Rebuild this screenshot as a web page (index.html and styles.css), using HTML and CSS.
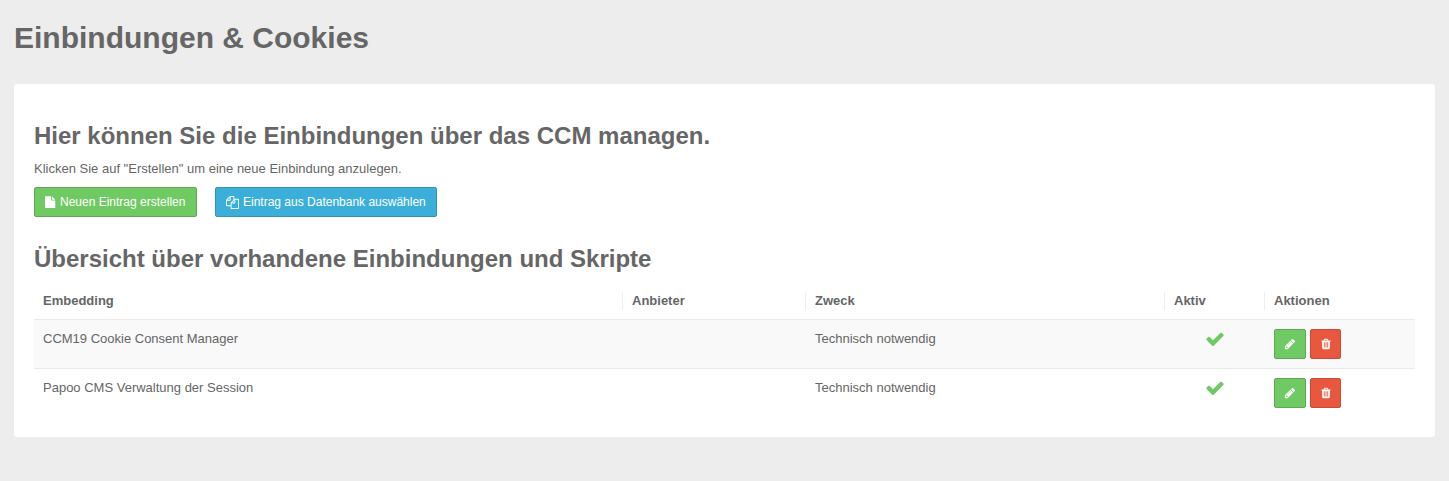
FILE: index.html
```html
<!DOCTYPE html>
<html lang="de">
<head>
<meta charset="utf-8">
<title>Einbindungen &amp; Cookies</title>
<link rel="stylesheet" href="styles.css">
</head>
<body>
<svg class="sprite" aria-hidden="true">
  <symbol id="check" viewBox="0 0 1792 1792"><path d="M1671 566q0 40-28 68l-724 724-136 136q-28 28-68 28t-68-28l-136-136-362-362q-28-28-28-68t28-68l136-136q28-28 68-28t68 28l294 295 656-657q28-28 68-28t68 28l136 136q28 28 28 68z"/></symbol>
  <symbol id="pencil" viewBox="0 0 1792 1792"><path d="M491 1536l91-91-235-235-91 91v107h128v128h107zm523-928q0-22-22-22-10 0-17 7l-542 542q-7 7-7 17 0 22 22 22 10 0 17-7l542-542q7-7 7-17zm-54-192l416 416-832 832h-416v-416zm683 96q0 53-37 90l-166 166-416-416 166-165q36-38 90-38 53 0 91 38l235 234q37 39 37 91z"/></symbol>
  <symbol id="trash" viewBox="0 0 1792 1792"><path d="M704 1376v-704q0-14-9-23t-23-9h-64q-14 0-23 9t-9 23v704q0 14 9 23t23 9h64q14 0 23-9t9-23zm256 0v-704q0-14-9-23t-23-9h-64q-14 0-23 9t-9 23v704q0 14 9 23t23 9h64q14 0 23-9t9-23zm256 0v-704q0-14-9-23t-23-9h-64q-14 0-23 9t-9 23v704q0 14 9 23t23 9h64q14 0 23-9t9-23zm-544-992h448l-48-117q-7-9-17-11h-317q-10 2-17 11zm928 32v64q0 14-9 23t-23 9h-96v948q0 83-47 143.500t-113 60.500h-832q-66 0-113-58.500t-47-141.500v-952h-96q-14 0-23-9t-9-23v-64q0-14 9-23t23-9h309l70-167q15-37 54-63t79-26h320q40 0 79 26t54 63l70 167h309q14 0 23 9t9 23z"/></symbol>
  <symbol id="file" viewBox="128 0 1536 1792"><path d="M1152 512v-472q22 14 36 28l408 408q14 14 28 36h-472zm-128 32q0 40 28 68t68 28h544v1056q0 40-28 68t-68 28h-1344q-40 0-68-28t-28-68v-1600q0-40 28-68t68-28h800v544z"/></symbol>
  <symbol id="files" viewBox="0 0 1792 1792"><path d="M1696 384q40 0 68 28t28 68v1216q0 40-28 68t-68 28h-960q-40 0-68-28t-28-68v-288h-544q-40 0-68-28t-28-68v-672q0-40 20-88t48-76l408-408q28-28 76-48t88-20h416q40 0 68 28t28 68v328q68-40 128-40h416zm-544 213l-299 299h299v-299zm-640-384l-299 299h299v-299zm196 647l316-316v-416h-384v416q0 40-28 68t-68 28h-416v640h512v-256q0-40 20-88t48-76zm956 804v-1152h-384v416q0 40-28 68t-68 28h-416v640h896z"/></symbol>
</svg>
<h1 class="page-title">Einbindungen &amp; Cookies</h1>
<main class="panel">
  <h2 class="heading">Hier können Sie die Einbindungen über das CCM managen.</h2>
  <p class="intro">Klicken Sie auf "Erstellen" um eine neue Einbindung anzulegen.</p>
  <div class="toolbar">
    <a class="btn btn-success btn-create"><svg class="icon-file"><use href="#file"/></svg><span>Neuen Eintrag erstellen</span></a>
    <a class="btn btn-info"><svg class="icon-files"><use href="#files"/></svg><span>Eintrag aus Datenbank auswählen</span></a>
  </div>
  <h2 class="heading">Übersicht über vorhandene Einbindungen und Skripte</h2>
  <table class="list">
    <colgroup><col class="c-name"><col class="c-vendor"><col class="c-purpose"><col class="c-active"><col></colgroup>
    <thead>
      <tr><th><div>Embedding</div></th><th><div>Anbieter</div></th><th><div>Zweck</div></th><th><div>Aktiv</div></th><th><div>Aktionen</div></th></tr>
    </thead>
    <tbody>
      <tr>
        <td>CCM19 Cookie Consent Manager</td><td></td><td>Technisch notwendig</td>
        <td><svg class="icon-check"><use href="#check"/></svg></td>
        <td><div class="actions"><a class="btn btn-success btn-edit"><svg class="icon-action"><use href="#pencil"/></svg></a><a class="btn btn-danger"><svg class="icon-action"><use href="#trash"/></svg></a></div></td>
      </tr>
      <tr>
        <td>Papoo CMS Verwaltung der Session</td><td></td><td>Technisch notwendig</td>
        <td><svg class="icon-check"><use href="#check"/></svg></td>
        <td><div class="actions"><a class="btn btn-success btn-edit"><svg class="icon-action"><use href="#pencil"/></svg></a><a class="btn btn-danger"><svg class="icon-action"><use href="#trash"/></svg></a></div></td>
      </tr>
    </tbody>
  </table>
</main>
</body>
</html>
```
FILE: styles.css
```css
* { box-sizing: border-box; }
body {
  margin: 0;
  padding: 18px 14px 0;
  background: #ededed;
  color: #666;
  font: 13px/20px "Liberation Sans", Arial, sans-serif;
}
.sprite { display: none; }
.page-title { margin: 0 0 26px; font-size: 30px; line-height: 40px; }
.panel {
  height: 353px;
  padding: 35px 20px 0;
  background: #fff;
  border-radius: 3px;
}
.heading { margin: 0; font-size: 24px; line-height: 34px; }
.intro { margin: 6px 0 8px; }
.toolbar { display: flex; gap: 18px; margin-bottom: 25px; }
.btn {
  display: flex;
  align-items: center;
  height: 30px;
  padding: 0 10px;
  border: 1px solid;
  border-radius: 2px;
  color: #fff;
  font-size: 12px;
}
.btn svg { fill: #fff; }
.btn-success { background: #70ca63; border-color: #5fa956; }
.btn-info { background: #3bafda; border-color: #3494b8; }
.btn-danger { width: 31px; justify-content: center; padding: 0; background: #e9573f; border-color: #c44c38; }
.btn-edit { width: 32px; justify-content: center; padding: 0; }
.btn-create { width: 163px; }
.icon-file { width: 10.5px; height: 12.5px; margin-right: 4.500px; }
.icon-files { width: 13px; height: 13px; margin-right: 4px; }
.icon-action { width: 12px; height: 12px; }
.icon-check { display: block; width: 20px; height: 20px; margin: 0 auto; fill: #70ca63; }
.list { width: 1381px; table-layout: fixed; border-collapse: collapse; }
.c-name { width: 588px; }
.c-vendor { width: 183px; }
.c-purpose { width: 359px; }
.c-active { width: 100px; }
th { height: 43px; padding: 7px 0 0; text-align: left; vertical-align: middle; }
th div { height: 18px; padding-left: 9px; line-height: 18px; }
th + th div { padding-left: 9px; border-left: 1px solid #eee; }
td { height: 49px; padding: 9px 9px 9px 10px; border-top: 1px solid #eaeaea; vertical-align: top; }
td:first-child { padding-left: 9px; }
tbody tr:first-child { background: #f9f9f9; }
.actions { display: flex; gap: 4px; }
```
